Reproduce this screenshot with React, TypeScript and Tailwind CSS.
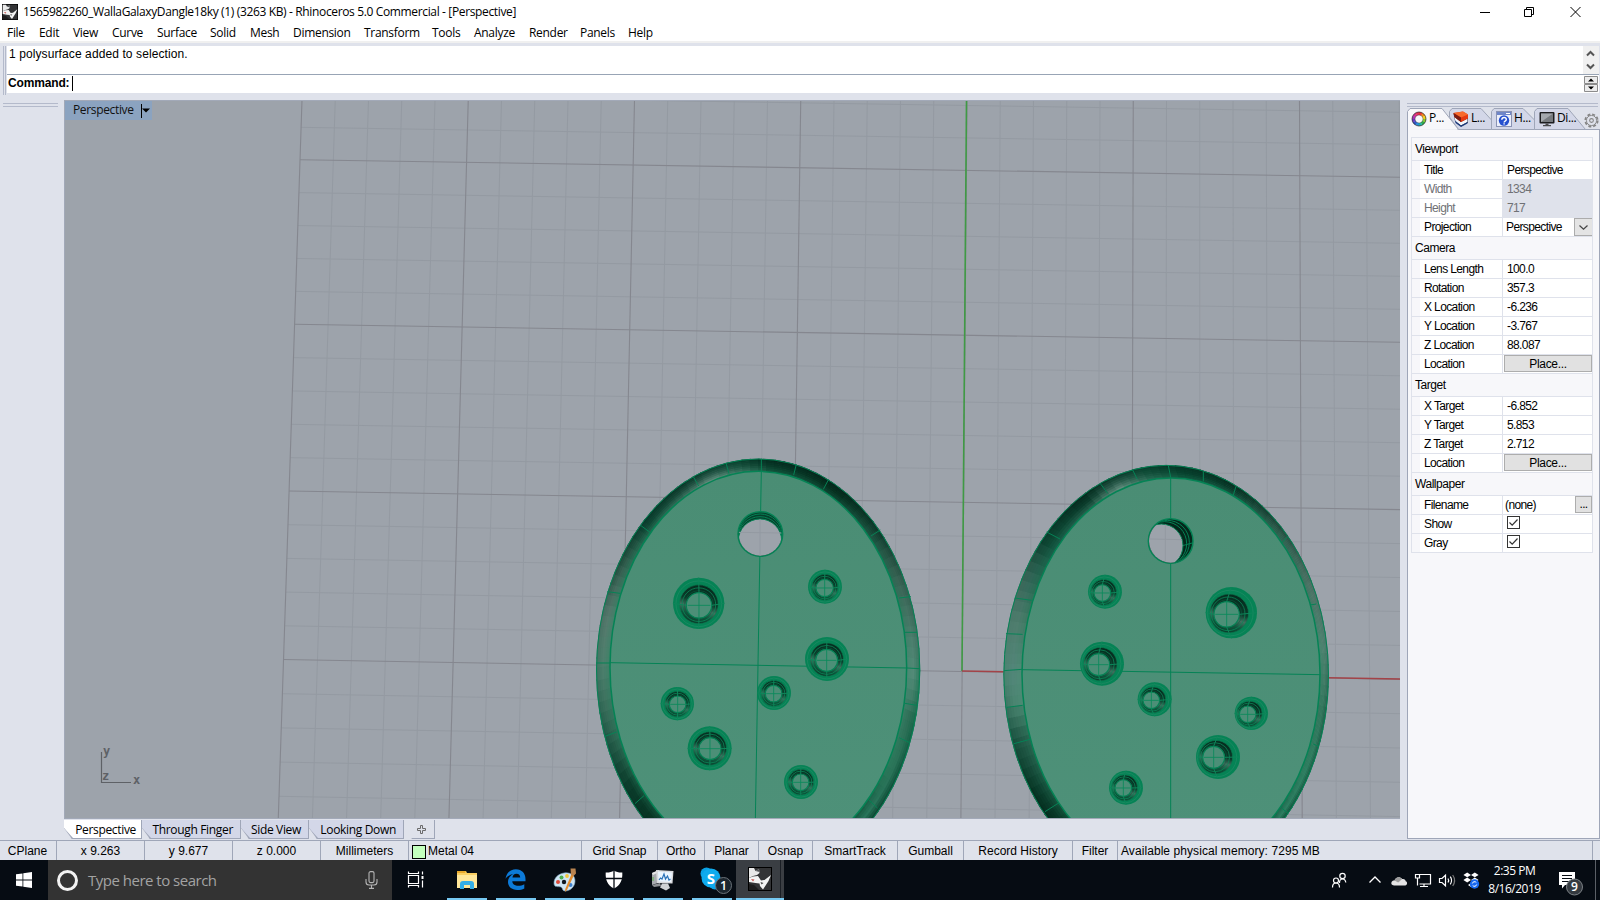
import React from "react";

type Pt = [number, number];
type RGB = [number, number, number];

const lerp = (a: number, b: number, t: number) => a + (b - a) * t;
const hex = (h: string): RGB => [
  parseInt(h.slice(1, 3), 16),
  parseInt(h.slice(3, 5), 16),
  parseInt(h.slice(5, 7), 16),
];
const mix = (a: RGB, b: RGB, t: number): RGB => [lerp(a[0], b[0], t), lerp(a[1], b[1], t), lerp(a[2], b[2], t)];
const css = (c: RGB) => `rgb(${Math.round(c[0])},${Math.round(c[1])},${Math.round(c[2])})`;

/* ---------- construction plane grid ---------- */

const vTop = (k: number) => 302 + 166.25 * k;
const vBot = (k: number) => 278.3 + 170.65 * k;
const rowsY = [127.1 - 32.3 * 4, 159.7, 324.3, 491, 659.5, 830.5];
const rowSlope = [0.0155, 0.016, 0.0163, 0.0168, 0.0178, 0.0182];

function leftX(y: number) {
  return lerp(302, 278.3, (y - 100) / 718);
}

function Grid() {
  const minor: React.ReactNode[] = [];
  const major: React.ReactNode[] = [];
  for (let i = 0; i <= 33; i++) {
    const k = i / 5;
    const el = (
      <line key={`v${i}`} x1={vTop(k)} y1={100} x2={vBot(k)} y2={818} stroke={i % 5 ? "#949aa2" : "#85878f"} strokeWidth={i % 5 ? 1 : 1.1} />
    );
    (i % 5 ? minor : major).push(el);
  }
  for (let s = 0; s < 5; s++) {
    for (let j = 0; j < 5; j++) {
      const y = lerp(rowsY[s], rowsY[s + 1], j / 5);
      const m = lerp(rowSlope[s], rowSlope[s + 1], j / 5);
      const x = leftX(y);
      const el = (
        <line key={`h${s}-${j}`} x1={x} y1={y} x2={1400} y2={y + m * (1400 - x)} stroke={j ? "#949aa2" : "#85878f"} strokeWidth={j ? 1 : 1.1} />
      );
      (j ? minor : major).push(el);
    }
  }
  return (
    <g>
      {minor}
      {major}
    </g>
  );
}

/* ---------- pendants ---------- */

type Stop = [number, string, string, string];

interface Rim {
  o: [number, number, number, number];
  i: [number, number, number, number];
  stops: Stop[];
}

function sample(stops: Stop[], a: number, t: number): string {
  let k = 0;
  while (k < stops.length - 2 && stops[k + 1][0] <= a) k++;
  const s = stops[k];
  const e = stops[k + 1];
  const u = (a - s[0]) / (e[0] - s[0]);
  const at = (n: 1 | 2 | 3) => mix(hex(s[n]), hex(e[n]), u);
  return css(t < 0.5 ? mix(at(1), at(2), t * 2) : mix(at(2), at(3), t * 2 - 1));
}

function RimShade({ rim }: { rim: Rim }) {
  const { o, i, stops } = rim;
  const out: React.ReactNode[] = [];
  const N = 120;
  const M = 7;
  const at = (a: number, t: number): Pt => {
    const r = (a * Math.PI) / 180;
    return [
      lerp(o[0], i[0], t) + Math.cos(r) * lerp(o[2], i[2], t),
      lerp(o[1], i[1], t) + Math.sin(r) * lerp(o[3], i[3], t),
    ];
  };
  for (let n = 0; n < N; n++) {
    const a0 = -180 + (n * 360) / N;
    const a1 = a0 + 360 / N + 0.5;
    if (a0 > 60 && a0 < 117) continue;
    for (let m = 0; m < M; m++) {
      const t0 = m / M;
      const t1 = Math.min(1.04, (m + 1.4) / M);
      const p = [at(a0, t0), at(a1, t0), at(a1, t1), at(a0, t1)];
      out.push(
        <polygon key={`${n}-${m}`} points={p.map((q) => q.map((v) => v.toFixed(1)).join(",")).join(" ")} fill={sample(stops, a0 + 1.5, (m + 0.5) / M)} />
      );
    }
  }
  return <g stroke="none">{out}</g>;
}

interface HoleSpec {
  c: [number, number, number];
  f: [number, number, number];
}

function Hole({ c, f }: HoleSpec) {
  const [cx, cy, R] = c;
  const [fx, fy, r] = f;
  const at = (t: number): [number, number, number] => [lerp(cx, fx, t), lerp(cy, fy, t), lerp(R, r, t)];
  const a = at(0.22);
  const b = at(0.48);
  const d = at(0.68);
  const e = at(0.86);
  return (
    <g fill="none">
      <circle cx={cx} cy={cy} r={R} fill="#058355" stroke="none" />
      <circle cx={a[0]} cy={a[1]} r={a[2]} stroke="#2c8c6a" strokeWidth={1.6} />
      <circle cx={b[0]} cy={b[1]} r={b[2]} fill="url(#well)" stroke="#0a7a50" strokeWidth={2} />
      <circle cx={d[0]} cy={d[1]} r={d[2]} stroke="#0b8658" strokeWidth={2.4} />
      <circle cx={e[0]} cy={e[1]} r={e[2]} stroke="#0b5e41" strokeWidth={1.6} />
      <circle cx={fx} cy={fy} r={r} fill="#4c8f77" stroke="#058355" strokeWidth={3.4} />
      <path d={`M${fx - r * 0.9} ${fy}H${fx + r * 0.9}M${fx} ${fy - r}V${fy + r}`} stroke="#0a8a5c" strokeWidth={2.6} />
      <path
        d={`M${cx - R} ${cy}L${fx - r} ${fy}M${cx + R} ${cy}L${fx + r} ${fy}M${cx} ${cy - R}L${fx} ${fy - r}M${cx} ${cy + R}L${fx} ${fy + r}`}
        stroke="#0d8659"
        strokeWidth={3}
      />
    </g>
  );
}

const leftRim: Rim = {
  o: [534.5, 690, 486, 634],
  i: [535, 682, 445, 588],
  stops: [
    [-180, "#3f7563", "#4e806d", "#3e8168"],
    [-165, "#4a6f63", "#56796d", "#44816a"],
    [-150, "#1c4a3a", "#355f50", "#2c7358"],
    [-135, "#07382a", "#0f4634", "#226a50"],
    [-120, "#063324", "#1b4a3b", "#3a7460"],
    [-108, "#063a29", "#2f5f50", "#6b9485"],
    [-97, "#07402d", "#1a5340", "#3d7a65"],
    [-85, "#04291d", "#083a29", "#14583f"],
    [-60, "#04261b", "#06301f", "#0f4a36"],
    [-42, "#0a3527", "#174636", "#1d5a45"],
    [-25, "#305a4c", "#3b6556", "#2f6b55"],
    [-8, "#3f7261", "#4d7f6e", "#3f8069"],
    [2, "#2a7a5c", "#548b78", "#4a8b74"],
    [14, "#176a4b", "#2d6e56", "#387c63"],
    [30, "#0e5039", "#2a7358", "#2b7a5b"],
    [48, "#0a3e2b", "#28745a", "#14563e"],
    [90, "#06301f", "#0d4632", "#0f4a36"],
    [125, "#04281c", "#06301f", "#0d4a35"],
    [145, "#0a3a2a", "#0b3d2b", "#1a5a43"],
    [160, "#1a5441", "#29604d", "#2d7158"],
    [180, "#3f7563", "#4e806d", "#3e8168"],
  ],
};

const rightRim: Rim = {
  o: [558.5, 705, 488, 630],
  i: [573, 702, 447, 588],
  stops: [
    [-180, "#4a8570", "#53867a", "#508b76"],
    [-165, "#4d7a6c", "#4f7d6d", "#3f7a64"],
    [-153, "#3c6657", "#34685a", "#256b51"],
    [-140, "#0b3f2e", "#0f4a36", "#17604a"],
    [-122, "#05281c", "#0a3a2a", "#2a6450"],
    [-110, "#073626", "#2f5f50", "#6b9485"],
    [-98, "#07402d", "#14513c", "#2a6d55"],
    [-85, "#053525", "#07402d", "#105a40"],
    [-65, "#062d20", "#0a3a2a", "#1a5a45"],
    [-45, "#1c4638", "#2e5a4b", "#2c6a54"],
    [-25, "#4b6d62", "#4f7567", "#3c7460"],
    [-8, "#46796a", "#4f8270", "#458670"],
    [10, "#205f49", "#34775d", "#34775d"],
    [30, "#155a40", "#2f8062", "#2a7a5b"],
    [48, "#0a4a34", "#2c7c5f", "#176047"],
    [90, "#06301f", "#0d4632", "#0f4a36"],
    [125, "#04281c", "#06301f", "#0a4a33"],
    [145, "#04301f", "#0c3f2e", "#1a5a43"],
    [162, "#17503d", "#235a48", "#2a6a54"],
    [172, "#3c7563", "#4a8570", "#4c8a74"],
    [180, "#4a8570", "#53867a", "#508b76"],
  ],
};

const leftTicks =
  "M544 56V92M438 69L447 101M340 110L356 138M183 257L210 277M82 455L120 460M75 889L110 876M165 1091L192 1067M649 73L641 105M746 118L730 148M901 270L873 288M993 470L957 474M1011 577H975M1020 686L980 684M1010 796L975 790M987 907L957 893M892 1104L865 1078M48 669H90";
const rightTicks =
  "M565 77L572 112M458 90L472 118M361 131L383 160M200 276L240 297M104 474L155 481M78 581L128 583M72 692L126 688M80 802L128 796M102 911L150 898M195 1115L236 1089M670 95V124M768 139L760 165M922 291L905 309M1009 492L990 495M1017 920L1000 912M925 1121L905 1104";

const leftHoles: HoleSpec[] = [
  { c: [356, 490, 77], f: [357, 496, 38] },
  { c: [735, 440, 51], f: [734, 444, 26] },
  { c: [741, 657, 66], f: [740, 661, 33] },
  { c: [582, 759, 51], f: [581, 761, 25] },
  { c: [292, 791, 50], f: [293, 793, 25] },
  { c: [389, 925, 66], f: [390, 926, 33] },
  { c: [663, 1026, 51], f: [662, 1027, 25] },
];
const rightHoles: HoleSpec[] = [
  { c: [375, 455, 51], f: [367, 459, 25] },
  { c: [754, 518, 77], f: [740, 523, 38] },
  { c: [366, 671, 66], f: [356, 674, 33] },
  { c: [524, 778, 51], f: [514, 781, 25] },
  { c: [814, 820, 50], f: [803, 823, 25] },
  { c: [714, 951, 66], f: [701, 952, 33] },
  { c: [438, 1043, 51], f: [430, 1044, 25] },
];

function Pendants() {
  return (
    <g>
      <defs>
        <linearGradient id="face" x1="0" y1="0" x2="0" y2="1">
          <stop offset="0" stopColor="#4a8d74" />
          <stop offset="1" stopColor="#4e9179" />
        </linearGradient>
        <linearGradient id="well" x1="0.7" y1="0" x2="0.4" y2="1">
          <stop offset="0" stopColor="#052a1d" />
          <stop offset="0.45" stopColor="#0a3b2a" />
          <stop offset="0.62" stopColor="#41705f" />
          <stop offset="0.8" stopColor="#0e553b" />
          <stop offset="1" stopColor="#0a3b2a" />
        </linearGradient>
        <clipPath id="bailL">
          <circle cx="541" cy="282" r="65" />
        </clipPath>
        <clipPath id="bailR">
          <circle cx="572" cy="303" r="65" />
        </clipPath>
      </defs>

      <g transform="translate(580 440) scale(0.33333)" fill="none" stroke="#058355">
        <RimShade rim={leftRim} />
        <ellipse cx="534.5" cy="690" rx="485" ry="633" strokeWidth={3} />
        <ellipse cx="535" cy="682" rx="445" ry="588" fill="url(#face)" strokeWidth={4.5} />
        <path d="M544 92L526 1140M90 668L980 684" strokeWidth={3} />
        <path d={leftTicks} strokeWidth={3} />
        <circle cx="541" cy="282" r="67" fill="#06402c" strokeWidth={4.5} />
        <g clipPath="url(#bailL)">
          <circle cx="541" cy="288" r="66" strokeWidth={3} />
          <circle cx="540" cy="296" r="66" strokeWidth={3} />
          <circle cx="540" cy="302" r="65" fill="#9da3ab" strokeWidth={3} />
          <path d="M540 238V350M476 277L604 279" stroke="#949aa2" strokeWidth={3} />
        </g>
        {leftHoles.map((h, n) => (
          <Hole key={n} {...h} />
        ))}
      </g>

      <g transform="translate(980 440) scale(0.33333)" fill="none" stroke="#058355">
        <RimShade rim={rightRim} />
        <ellipse cx="558.5" cy="705" rx="487" ry="629" strokeWidth={3} />
        <ellipse cx="573" cy="702" rx="447" ry="588" fill="url(#face)" strokeWidth={4.5} />
        <path d="M572 114V1140M126 689L1020 704" strokeWidth={3} />
        <path d={rightTicks} strokeWidth={3} />
        <circle cx="572" cy="303" r="67" fill="#04271b" strokeWidth={4.5} />
        <g clipPath="url(#bailR)">
          <circle cx="562" cy="307" r="66" strokeWidth={3} />
          <circle cx="554" cy="311" r="66" strokeWidth={3} />
          <path d="M604 318L640 308" strokeWidth={3} />
          <circle cx="544" cy="317" r="65" fill="#9da3ab" strokeWidth={3} />
          <path d="M556 254V370M506 297L606 299" stroke="#949aa2" strokeWidth={3} />
        </g>
        {rightHoles.map((h, n) => (
          <Hole key={n} {...h} />
        ))}
      </g>
    </g>
  );
}

function Scene() {
  return (
    <svg className="block h-[718px] w-[1336px]" viewBox="64 100 1336 718">
      <rect x="64" y="100" width="1336" height="718" fill="#9da3ab" />
      <Grid />
      <path d="M966.5 100L962 671" stroke="#3f9a44" strokeWidth={1.6} />
      <path d="M962 671L1400 679" stroke="#a34348" strokeWidth={1.5} />
      <Pendants />
      <path d="M101.5 752V782.5H131" stroke="#5e6166" strokeWidth={1.2} fill="none" />
      <g fill="#5e6166" fontFamily="'DejaVu Sans Mono', monospace" fontSize="12" fontWeight="bold">
        <text x="103" y="755">y</text>
        <text x="102" y="780">z</text>
        <text x="133" y="784">x</text>
      </g>
      <path d="M64.5 818V100.5H1400" stroke="#a2a9b8" fill="none" />
    </svg>
  );
}

/* ---------- icons ---------- */

function RhinoIcon({ className }: { className: string }) {
  return (
    <svg className={className} viewBox="0 0 24 24">
      <rect width="24" height="24" fill="#000" />
      <rect x="1" y="1" width="22" height="22" fill="#333436" />
      <path d="M1 17l5 1 5 5H1z" fill="#1d1d1e" />
      <path d="M1 1h5l1.500 3 3.500-2 .5 4-2.500 2L5 9l-4 2z" fill="#e9e9e9" />
      <path d="M1 11l4-1.500 5-.5 3 4.500 3.500-.5L23 8l-2.500 6L15 22.500l-3-3.500-.5-2.500-4-.5L1 15z" fill="#f4f4f4" />
      <path d="M3 12l3.500.5-1.500 2z" fill="#c65a55" />
      <path d="M12.500 15l3 1-2 1.500z" fill="#444" />
      <path d="M7.500 4L11 2l.5 3z" fill="#55575a" />
    </svg>
  );
}

const wheel = ["#e8372c", "#f08a1c", "#f2d21b", "#8ac832", "#2fae4a", "#22b2a6", "#2a8fd8", "#3156c8", "#6a3cc0", "#a734b4", "#d8308e", "#e22f58"];

function WheelIcon() {
  return (
    <svg className="size-[16px] shrink-0" viewBox="0 0 16 16" fill="none" strokeWidth={3}>
      {wheel.map((c, n) => {
        const a = (n / 12) * Math.PI * 2 - Math.PI / 2;
        const b = ((n + 1.1) / 12) * Math.PI * 2 - Math.PI / 2;
        return (
          <path key={c} stroke={c} d={`M${8 + 5.5 * Math.cos(a)} ${8 + 5.5 * Math.sin(a)}A5.5 5.5 0 0 1 ${8 + 5.5 * Math.cos(b)} ${8 + 5.5 * Math.sin(b)}`} />
        );
      })}
      <circle cx="8" cy="8" r="7" stroke="#222" strokeOpacity="0.75" strokeWidth={0.9} />
      <circle cx="8" cy="8" r="4" stroke="#222" strokeOpacity="0.5" strokeWidth={0.7} />
    </svg>
  );
}

function LayersIcon() {
  return (
    <svg className="size-[16px] shrink-0" viewBox="0 0 16 16">
      <path d="M0.500 2.500L2 10l6 5.500 7-4V4z" fill="#17223c" />
      <path d="M1.300 6l1.200 4.500L8 14.500l6.500-3.500V7.500L8 11z" fill="#f4f6fb" />
      <path d="M2 9.500l6 5 6.500-3.500v1.500L8 16l-5.500-4z" fill="#1d3b7c" />
      <path d="M0.500 2L10 0.500l5 3v4L8 11 1.500 6z" fill="#e63a12" />
      <path d="M0.500 2L10 0.500l5 3L8 6.500z" fill="#f86a2c" />
      <path d="M0.500 2L8 6.500V11L1.500 6z" fill="#7a1c14" />
    </svg>
  );
}

function HelpIcon() {
  return (
    <svg className="size-[16px] shrink-0" viewBox="0 0 16 16">
      <rect x="0.500" y="0.500" width="15" height="15" fill="#eceffa" stroke="#8a93b4" />
      <rect x="1" y="1" width="14" height="3" fill="#6f86c8" />
      <path d="M10 2.500h4" stroke="#fff" />
      <circle cx="8" cy="9.500" r="5.200" fill="#2550cf" />
      <path d="M5.800 8.700c0-3 4.500-2.800 4.500-.2 0 1.700-2.200 1.600-2.200 3M8.100 12.300v1.200" stroke="#fff" strokeWidth={1.400} fill="none" />
    </svg>
  );
}

function DisplayIcon() {
  return (
    <svg className="size-[16px] shrink-0" viewBox="0 0 16 16">
      <rect x="0.500" y="1" width="15" height="11.500" rx="1" fill="#1c1d1f" />
      <rect x="2" y="2.500" width="12" height="8.500" fill="#777b80" />
      <path d="M2 2.500h12L2 11z" fill="#a4a8ad" />
      <path d="M6.500 12.500h3v1.500h2.500v1.300h-8V14h2.500z" fill="#4a4b4e" />
    </svg>
  );
}

function GearIcon() {
  return (
    <svg className="size-[15px]" viewBox="0 0 16 16" fill="none" stroke="#858585">
      <circle cx="8" cy="8" r="6.600" strokeWidth={1.900} strokeDasharray="3.100 2.080" />
      <circle cx="8" cy="8" r="5.400" strokeWidth={1} />
      <circle cx="8" cy="8" r="2" strokeWidth={1.100} />
    </svg>
  );
}

/* ---------- title, menu and command areas ---------- */

const menus: [string, string][] = [
  ["File", "w-[32px]"],
  ["Edit", "w-[34px]"],
  ["View", "w-[39px]"],
  ["Curve", "w-[45px]"],
  ["Surface", "w-[53px]"],
  ["Solid", "w-[40px]"],
  ["Mesh", "w-[43px]"],
  ["Dimension", "w-[71px]"],
  ["Transform", "w-[68px]"],
  ["Tools", "w-[42px]"],
  ["Analyze", "w-[55px]"],
  ["Render", "w-[51px]"],
  ["Panels", "w-[48px]"],
  ["Help", "w-[40px]"],
];

function Header() {
  return (
    <header className="h-[41px] bg-white font-['Open_Sans','Noto_Sans',sans-serif] text-[12px] text-black">
      <div className="flex h-[24px] items-center">
        <RhinoIcon className="ml-[2px] mr-[5px] size-[16px]" />
        <span className="whitespace-nowrap tracking-[-0.357px]">
          1565982260_WallaGalaxyDangle18ky (1) (3263 KB) - Rhinoceros 5.0 Commercial - [Perspective]
        </span>
        <svg className="ml-auto mr-[18px] h-[12px] w-[104px]" viewBox="0 0 104 12" fill="none" stroke="#000">
          <path d="M2 6.500h10" />
          <path d="M46.500 3.500h7v7h-7zM48.500 3.500v-2h7v7h-2" />
          <path d="M92.500 1l10 10M102.500 1l-10 10" />
        </svg>
      </div>
      <nav className="flex h-[17px] items-center pl-[7px] tracking-[-0.3px]">
        {menus.map(([m, w]) => (
          <span key={m} className={w}>
            {m}
          </span>
        ))}
      </nav>
    </header>
  );
}

function CommandArea() {
  return (
    <section className="flex h-[52px] border-t-2 border-[#f0f0f0] pt-[3px] font-['Liberation_Sans',Arial,sans-serif] text-[12px] text-black">
      <div className="ml-[3px] mr-px h-[49px] w-[3px] border-x border-[#b4bacb]" />
      <div className="flex w-[1592px] flex-col">
        <div className="flex h-[28px] justify-between bg-white">
          <span className="ml-[2px] mt-px h-[14px] leading-[14px] tracking-[0.1px]">1 polysurface added to selection.</span>
          <svg className="h-[28px] w-[16px] bg-[#f0f0f0]" viewBox="0 0 16 28" fill="none" stroke="#555" strokeWidth={2}>
            <path d="M4 9.500L7.500 6l3.500 3.500M4 18.500L7.500 22l3.500-3.500" />
          </svg>
        </div>
        <div className="flex h-[19px] border-t border-[#98a4b5] bg-white">
          <span className="ml-px mt-px font-bold leading-[15px] tracking-[-0.15px]">Command:</span>
          <span className="ml-[3px] mt-px h-[15px] w-px bg-black" />
          <svg className="ml-auto mr-px h-[18px] w-[14px]" viewBox="0 0 14 18">
            <path d="M0.500 1.500h13v7h-13zM0.500 9.500h13v7h-13z" fill="#ececec" stroke="#8c8c8c" />
            <path d="M4 6.500h6L7 3.500zM4 11.500h6l-3 3z" fill="#000" />
          </svg>
        </div>
      </div>
    </section>
  );
}

/* ---------- viewport column ---------- */

const viewTabs: { label: string; w: string; active?: boolean }[] = [
  { label: "Perspective", w: "w-[78px]", active: true },
  { label: "Through Finger", w: "w-[99px]" },
  { label: "Side View", w: "w-[68px]" },
  { label: "Looking Down", w: "w-[95px]" },
];

function ViewTabs() {
  return (
    <div className="flex h-[22px] pt-px font-['Open_Sans','Noto_Sans',sans-serif] text-[12px] tracking-[-0.33px] text-black">
      {viewTabs.map((t) => (
        <div
          key={t.label}
          className={`${t.w} h-[19px] border-b-2 border-r border-[#9fa6b8] bg-[#9fa6b8] [clip-path:polygon(0_0,100%_0,100%_100%,8px_100%,0_8px)]`}
        >
          <div
            className={`${t.active ? "bg-white pr-[5px]" : "bg-[#d3d7e8] pr-[7px]"} h-[18px] text-right leading-[20px] whitespace-nowrap [clip-path:polygon(0_0,100%_0,100%_100%,9px_100%,0_8px)]`}
          >
            {t.label}
          </div>
        </div>
      ))}
      <div className="flex h-[19px] w-[31px] items-center justify-center border-b border-r border-[#9fa6b8] pl-[4px] pt-[2px] [clip-path:polygon(0_0,100%_0,100%_100%,8px_100%,0_8px)]">
        <svg className="size-[9px]" viewBox="0 0 9 9" fill="none" stroke="#6a6a6a">
          <path d="M3.500 0.500h2v3h3v2h-3v3h-2v-3h-3v-2h3z" />
        </svg>
      </div>
    </div>
  );
}

function Viewport() {
  return (
    <div className="flex w-[1336px] flex-col pt-[5px]">
      <div className="relative mt-[2px] h-[718px]">
        <Scene />
        <div className="absolute left-0 top-0 flex h-[20px] w-[88px] items-center border-l border-t border-[#a2a9b8] bg-[#8ba3c0] pl-[8px] font-['Open_Sans','Noto_Sans',sans-serif] text-[12px] tracking-[-0.35px] text-[#111]">
          <span className="pb-[2px]">Perspective</span>
          <span className="ml-auto h-[14px] w-px bg-black" />
          <svg className="mb-px mr-[2px] h-[5px] w-[8px]" viewBox="0 0 8 5">
            <path d="M0 0.500h8l-4 4z" fill="#000" />
          </svg>
        </div>
      </div>
      <div className="h-px bg-[#a2a9b8]" />
      <ViewTabs />
    </div>
  );
}

/* ---------- properties panel ---------- */

type Row = { k: string; v?: string; kind?: "off" | "select" | "place" | "file" | "check" };

const groups: { name: string; rows: Row[] }[] = [
  {
    name: "Viewport",
    rows: [
      { k: "Title", v: "Perspective" },
      { k: "Width", v: "1334", kind: "off" },
      { k: "Height", v: "717", kind: "off" },
      { k: "Projection", v: "Perspective", kind: "select" },
    ],
  },
  {
    name: "Camera",
    rows: [
      { k: "Lens Length", v: "100.0" },
      { k: "Rotation", v: "357.3" },
      { k: "X Location", v: "-6.236" },
      { k: "Y Location", v: "-3.767" },
      { k: "Z Location", v: "88.087" },
      { k: "Location", kind: "place" },
    ],
  },
  {
    name: "Target",
    rows: [
      { k: "X Target", v: "-6.852" },
      { k: "Y Target", v: "5.853" },
      { k: "Z Target", v: "2.712" },
      { k: "Location", kind: "place" },
    ],
  },
  {
    name: "Wallpaper",
    rows: [
      { k: "Filename", v: "(none)", kind: "file" },
      { k: "Show", kind: "check" },
      { k: "Gray", kind: "check" },
    ],
  },
];

function Value({ row }: { row: Row }) {
  switch (row.kind) {
    case "off":
      return <div className="flex-1 bg-[#dfe2eb] pl-[4px] text-[#6f7175]">{row.v}</div>;
    case "select":
      return (
        <div className="flex flex-1 justify-between pl-[3px]">
          {row.v}
          <span className="flex h-[18px] w-[18px] items-center justify-center border border-r-0 border-[#acacac] bg-[#e4e4e4]">
            <svg className="h-[5px] w-[9px]" viewBox="0 0 9 5" fill="none" stroke="#444" strokeWidth={1.200}>
              <path d="M0.500 0.500l4 3.700 4-3.700" />
            </svg>
          </span>
        </div>
      );
    case "place":
      return (
        <div className="flex-1 pl-px">
          <div className="h-[17px] w-[88px] border border-[#adadad] bg-[#e1e1e1] text-center leading-[16px] tracking-[-0.3px]">Place...</div>
        </div>
      );
    case "file":
      return (
        <div className="flex flex-1 justify-between pl-[2px]">
          {row.v}
          <span className="h-[17px] w-[17px] border border-[#adadad] bg-[#e1e1e1] text-center leading-[15px]">...</span>
        </div>
      );
    case "check":
      return (
        <div className="flex-1 pl-[4px] pt-px">
          <svg className="size-[13px]" viewBox="0 0 13 13" fill="none" stroke="#333">
            <rect x="0.500" y="0.500" width="12" height="12" fill="#fff" />
            <path d="M2.500 6.500l2.700 2.700 5.300-5.700" strokeWidth={1.200} />
          </svg>
        </div>
      );
    default:
      return <div className="flex-1 pl-[4px]">{row.v}</div>;
  }
}

function Properties() {
  return (
    <div className="ml-[3px] mt-[7px] w-[182px] border border-b-0 border-[#dfe2eb] font-['Liberation_Sans',Arial,sans-serif] text-[12px] tracking-[-0.62px] text-black">
      {groups.map((g) => (
        <div key={g.name}>
          <div className="h-[23px] border-b border-[#dfe2eb] bg-[#f7f7fa] pl-[3px] leading-[22px] tracking-[-0.45px]">{g.name}</div>
          {g.rows.map((r) => (
            <div key={r.k} className="flex h-[19px] border-b border-[#dfe2eb] bg-white leading-[19px]">
              <div className="w-[8px] bg-[#f7f7fa]" />
              <div className={`${r.kind === "off" ? "text-[#6f7175]" : ""} w-[83px] border-r border-[#dfe2eb] pl-[4px]`}>{r.k}</div>
              <Value row={r} />
            </div>
          ))}
        </div>
      ))}
    </div>
  );
}

const panelTabs = [
  { label: "P...", icon: <WheelIcon />, w: "w-[42px]", pad: "pl-[4px]", active: true },
  { label: "L...", icon: <LayersIcon />, w: "w-[42px]", pad: "pl-[4px]", active: false },
  { label: "H...", icon: <HelpIcon />, w: "w-[43px]", pad: "pl-[5px]", active: false },
  { label: "Di...", icon: <DisplayIcon />, w: "w-[52px]", pad: "pl-[5px]", active: false },
];

const tabShapes = [
  "M0.500 22V3.500L3 0.500H35L51.500 21.500",
  "M42.500 9V3.500L45 0.500H74L84.500 12V21.500H51.500z",
  "M84.500 21V3.500L87 0.500H116L127.500 12V21.500H84.500z",
  "M127.500 21V3.500L130 0.500H161L178.500 21.500H127.500z",
];

function SidePanel() {
  return (
    <aside className="flex w-[193px] flex-col pt-[10px]">
      <div className="h-[4px] w-[191px] border-y border-[#b4bacb]" />
      <div className="relative mt-px h-[22px]">
        <svg className="absolute inset-0 h-[22px] w-[193px]" viewBox="0 0 193 22" fill="#d3d7e8" stroke="#9fa6b8">
          <path d="M50 21.500H193" />
          <path d={tabShapes[3]} />
          <path d={tabShapes[2]} />
          <path d={tabShapes[1]} />
          <path d={tabShapes[0]} fill="#f7f7fa" />
        </svg>
        <div className="relative flex h-[21px] items-center font-['Open_Sans','Noto_Sans',sans-serif] text-[12px] tracking-[-0.4px] text-black">
          {panelTabs.map((t) => (
            <span key={t.label} className={`${t.w} ${t.pad} flex items-center gap-[2px]`}>
              {t.icon}
              <span className="pb-[2px]">{t.label}</span>
            </span>
          ))}
          <span className="-ml-[3px] pl-px pt-[4px]">
            <GearIcon />
          </span>
        </div>
      </div>
      <div className="h-[709px] border border-t-0 border-[#9fa6b8] bg-[#f7f7fa]">
        <Properties />
      </div>
    </aside>
  );
}

/* ---------- status bar ---------- */

const status: [string, string][] = [
  ["CPlane", "w-[57px] justify-center pr-px"],
  ["x 9.263", "w-[88px] justify-center"],
  ["y 9.677", "w-[88px] justify-center"],
  ["z 0.000", "w-[88px] justify-center"],
  ["Millimeters", "w-[88px] justify-center"],
  ["Metal 04", "w-[173px] pl-[3px]"],
  ["Grid Snap", "w-[76px] justify-center"],
  ["Ortho", "w-[47px] justify-center"],
  ["Planar", "w-[54px] justify-center"],
  ["Osnap", "w-[54px] justify-center"],
  ["SmartTrack", "w-[85px] justify-center"],
  ["Gumball", "w-[66px] justify-center"],
  ["Record History", "w-[109px] justify-center"],
  ["Filter", "w-[45px] justify-center"],
  ["Available physical memory: 7295 MB", "w-[475px] pl-[3px] tracking-[0.07px]"],
];

function StatusBar() {
  return (
    <footer className="flex h-[20px] border-t border-[#9fa6b8] font-['Liberation_Sans',Arial,sans-serif] text-[12px] text-black">
      {status.map(([s, c]) => (
        <div key={s} className={`${c} flex items-center whitespace-nowrap border-r border-[#9fa6b8] pt-px`}>
          {s === "Metal 04" && <span className="mr-[2px] mt-px size-[14px] border border-black bg-[#c3ffbe]" />}
          {s}
        </div>
      ))}
    </footer>
  );
}

/* ---------- taskbar ---------- */

function TaskButton({ children, running = true, className = "w-[49px]" }: { children: React.ReactNode; running?: boolean; className?: string }) {
  return (
    <div className={`flex h-[40px] flex-col items-center ${className}`}>
      <div className="flex h-[38px] items-center pt-[1px]">{children}</div>
      <div className={`${running ? "bg-[#76c9f2]" : ""} h-[2px] w-[40px]`} />
    </div>
  );
}

function ExplorerIcon() {
  return (
    <svg className="h-[20px] w-[22px]" viewBox="0 0 22 20">
      <path d="M1 1h9l1 2h10v15H1z" fill="#f9cf62" />
      <path d="M1 5h20v13H1z" fill="#ffe79a" />
      <path d="M1 1h9l-1 2H1z" fill="#e8a92c" />
      <path d="M4 19v-5q0-3 3-3h8q3 0 3 3v5h-4v-4H8v4z" fill="#35aee6" />
    </svg>
  );
}

function EdgeIcon() {
  return (
    <svg className="size-[21px]" viewBox="0 0 21 21">
      <path
        d="M0.500 9.700C1.600 3.500 5.700 0.300 10.900 0.300c6 0 9.600 4.300 9.600 9.800v2.200H7.300c.1 3 2.700 4.500 6 4.500 2.200 0 4.200-.5 6-1.600v4.200c-2 1-4.400 1.500-7 1.500C6.500 20.900 3 17.600 3 13c0-3.600 2-6.500 5.100-8C5.300 5.600 2.500 7 .5 9.700zM7.500 8.600h7.700c0-2.500-1.300-3.900-3.700-3.900S7.700 6.300 7.500 8.600z"
        fill="#0c7ad8"
      />
    </svg>
  );
}

function PaintIcon() {
  return (
    <svg className="size-[24px]" viewBox="0 0 24 24">
      <path d="M11 5c6-1 11 2 11 8 0 6-5 10-10 10-3 0-2-3-4-4-3-1-7 1-7-4C1 10 5 6 11 5z" fill="#cfe6f4" stroke="#7fa9c4" strokeWidth={0.600} />
      <circle cx="5" cy="14" r="2" fill="#dd4b39" />
      <circle cx="8.500" cy="9.500" r="2" fill="#4caf50" />
      <circle cx="14" cy="8" r="1.900" fill="#f2c63c" />
      <circle cx="11" cy="14" r="2.200" fill="#101820" />
      <circle cx="17.500" cy="17" r="2" fill="#3f82cf" />
      <path d="M18.500 6l2.500 1-7 15-2 2 .3-3z" fill="#e28d2f" />
      <path d="M17.500 0.500l5 0 .5 5-2.500 2.500-2.500-1z" fill="#b98450" />
    </svg>
  );
}

function ShieldIcon() {
  return (
    <svg className="h-[19px] w-[18px]" viewBox="0 0 18 19">
      <path d="M9 0.500c2.500 1.700 5.300 2.200 8.300 2 .4 7.500-1.800 12.800-8.300 16-6.500-3.200-8.700-8.500-8.300-16 3 .2 5.800-.3 8.300-2z" fill="#fff" />
      <path d="M9 0v19M0 8.500h18" stroke="#060b12" strokeWidth={1.300} />
    </svg>
  );
}

function MonitorIcon() {
  return (
    <svg className="size-[23px]" viewBox="0 0 23 23">
      <path d="M1 5l7-3 2 12-9 3z" fill="#a9acb0" />
      <path d="M1 5l7-3v2L2 7z" fill="#e6e7e9" />
      <path d="M2 9v4" stroke="#59b24c" />
      <path d="M5 2l17.500 1-1 12.500L6 15z" fill="#d9dbde" />
      <path d="M7 3.500l14 1-.8 9.500-12.700-.5z" fill="#eaf5ff" />
      <path d="M8 12l1.500-2 1.500 1 2-5 1.500 5 2-3 1.500 4 1.500-1" fill="none" stroke="#2a72b8" strokeWidth={1.200} />
      <path d="M11 15.500h6l2 4.500-4 2.500-6-3z" fill="#cfd2d5" />
      <path d="M1 17l8-2 1 3-7 1z" fill="#8f9296" />
    </svg>
  );
}

function SkypeIcon() {
  return (
    <svg className="h-[28px] w-[32px]" viewBox="0 0 32 28">
      <circle cx="6.500" cy="6.500" r="6" fill="#0aa2e6" />
      <circle cx="15" cy="16" r="6.500" fill="#0aa2e6" />
      <circle cx="11" cy="11" r="9.500" fill="#0fabee" />
      <text x="11" y="16.500" textAnchor="middle" fontFamily="'Open Sans', sans-serif" fontWeight="bold" fontSize="15" fill="#fff">
        S
      </text>
      <circle cx="23.500" cy="18.500" r="8" fill="#1c262e" stroke="#6b7278" />
      <text x="23.500" y="23" textAnchor="middle" fontFamily="'Open Sans', sans-serif" fontWeight="600" fontSize="12.500" fill="#fff">
        1
      </text>
    </svg>
  );
}

function Tray() {
  return (
    <svg className="h-[40px] w-[160px]" viewBox="1328 860 160 40" fill="none" stroke="#fff" strokeWidth={1.200}>
      <circle cx="1342.500" cy="876" r="2.700" />
      <path d="M1339.500 883c0-2.500 1.200-4 3-4s3 1.300 3.300 3.500" />
      <circle cx="1336" cy="880.500" r="2.500" />
      <path d="M1332.500 887.500c0-3 1.300-4.500 3.500-4.500s3.500 1.500 3.500 4.500" />
      <path d="M1369.500 882.500l5.500-5.500 5.500 5.500" strokeWidth={1.300} />
      <path d="M1394 885.500c-2.500 0-3.300-2-2.300-3.700.7-1.200 2-1.500 2.800-1.300.7-3 5-4.600 7.700-1.500 2-.4 3.500.6 3.500 2.300 2 .5 1.800 4.200-.5 4.200z" fill="#e4e4e4" stroke="none" />
      <path d="M1394.500 880.500c.7-3 5-4.600 7.700-1.500l-4 3.500z" fill="#9d9d9d" stroke="none" />
      <path d="M1420 874.500h10.500v9.500h-11M1415.500 874.500h4v3.500h-4zM1417.500 878v7.500M1424 884v3M1420 886.500h8" />
      <path d="M1439.500 878.500h2.500l3.500-3.300v10.600l-3.500-3.300h-2.500z" />
      <path d="M1448 878.500q1.300 2 0 4M1450.300 876.700q2.600 3.800 0 7.600" />
      <path d="M1452.700 875q3.800 5.500 0 11" stroke="#777" />
      <path
        d="M1467.200 872.500l3.800 2.400-3.800 2.400-3.800-2.400zM1474.800 872.500l3.800 2.400-3.800 2.400-3.800-2.400zM1467.200 877.600l3.800 2.400-3.800 2.400-3.800-2.400zM1474.800 877.600l3.800 2.400-3.800 2.400-3.800-2.400zM1471 883l3 2-3 2-3-2z"
        fill="#fff"
        stroke="none"
      />
      <circle cx="1474.500" cy="884" r="4.700" fill="#1668f0" stroke="none" />
      <path d="M1472.300 883.500a2.300 2.300 0 0 1 4-1M1476.700 884.500a2.300 2.300 0 0 1-4 1" strokeWidth={1} />
    </svg>
  );
}

function Taskbar() {
  return (
    <div className="flex h-[40px] bg-[#060c13] font-['Open_Sans','Noto_Sans',sans-serif] text-white">
      <div className="flex w-[48px] items-center justify-center">
        <svg className="size-[16px]" viewBox="0 0 16 16" fill="#fff">
          <path d="M0 2.300L6.500 1.400V7.600H0zM7.300 1.300L16 0v7.600H7.300zM0 8.400h6.500v6.200L0 13.700zM7.300 8.400H16V16l-8.700-1.300z" />
        </svg>
      </div>
      <div className="flex w-[344px] items-center bg-[#333333]">
        <span className="ml-[9px] size-[21px] rounded-full border-[3px] border-[#f2f2f2]" />
        <span className="ml-[10px] text-[15px] tracking-[-0.5px] text-[#a3a3a3]">Type here to search</span>
        <svg className="ml-auto mr-[14px] h-[18px] w-[13px]" viewBox="0 0 13 18" fill="none" stroke="#b5b5b5" strokeWidth={1.100}>
          <rect x="4" y="0.600" width="5" height="11" rx="1.500" />
          <path d="M1 8v3q0 3 3 3h5q3 0 3-3V8M6.500 14v3.500M4 17.400h5" />
        </svg>
      </div>
      <TaskButton running={false} className="w-[50px] pr-[3px]">
        <svg className="h-[17px] w-[17px]" viewBox="0 0 17 17" fill="none" stroke="#fff" strokeWidth={1.200}>
          <path d="M1.500 4.500h10v8h-10zM1.500 0.500v2h10v-2M1.500 16.500v-2h10v2M15.500 0.500v3M15.500 9.500v7" />
          <rect x="14.500" y="5" width="2" height="3" fill="#fff" stroke="none" />
        </svg>
      </TaskButton>
      <TaskButton>
        <ExplorerIcon />
      </TaskButton>
      <TaskButton>
        <EdgeIcon />
      </TaskButton>
      <TaskButton>
        <PaintIcon />
      </TaskButton>
      <TaskButton>
        <ShieldIcon />
      </TaskButton>
      <TaskButton>
        <MonitorIcon />
      </TaskButton>
      <TaskButton>
        <div className="pl-[8px] pt-[2px]">
          <SkypeIcon />
        </div>
      </TaskButton>
      <div className="flex h-[40px] w-[48px] border-b-2 border-[#76c9f2] bg-[#3a3e43]">
        <div className="flex w-[45px] items-center justify-center border-r border-[#1a1f25] pl-[4px]">
          <RhinoIcon className="size-[24px]" />
        </div>
      </div>
      <div className="flex-1" />
      <Tray />
      <div className="w-[53px] whitespace-nowrap pt-[2px] text-center text-[12px] leading-[18px] tracking-[-0.5px]">
        <div>2:35 PM</div>
        <div>8/16/2019</div>
      </div>
      <svg className="ml-[15px] h-[40px] w-[39px]" viewBox="1556 860 39 40">
        <path d="M1559 872h16v13h-10l-3 3.500V885h-3z" fill="#fff" />
        <path d="M1562 875.500h10M1562 878.500h10M1562 881.500h7" stroke="#060c13" strokeWidth={1.100} />
        <circle cx="1574.500" cy="887" r="8" fill="#343a40" stroke="#7c8185" />
        <text x="1574.500" y="891.300" textAnchor="middle" fontFamily="'Open Sans', sans-serif" fontWeight="600" fontSize="12" fill="#fff">
          9
        </text>
      </svg>
      <div className="mr-[4px] w-px bg-[#5b6066]" />
    </div>
  );
}

export default function App() {
  return (
    <div className="h-[900px] w-[1600px] overflow-hidden bg-[#dfe2eb]">
      <Header />
      <CommandArea />
      <main className="flex h-[747px]">
        <div className="w-[64px] pl-[3px] pt-[10px]">
          <div className="h-[4px] w-[55px] border-y border-[#b4bacb]" />
        </div>
        <Viewport />
        <div className="w-[7px]" />
        <SidePanel />
      </main>
      <StatusBar />
      <Taskbar />
    </div>
  );
}
